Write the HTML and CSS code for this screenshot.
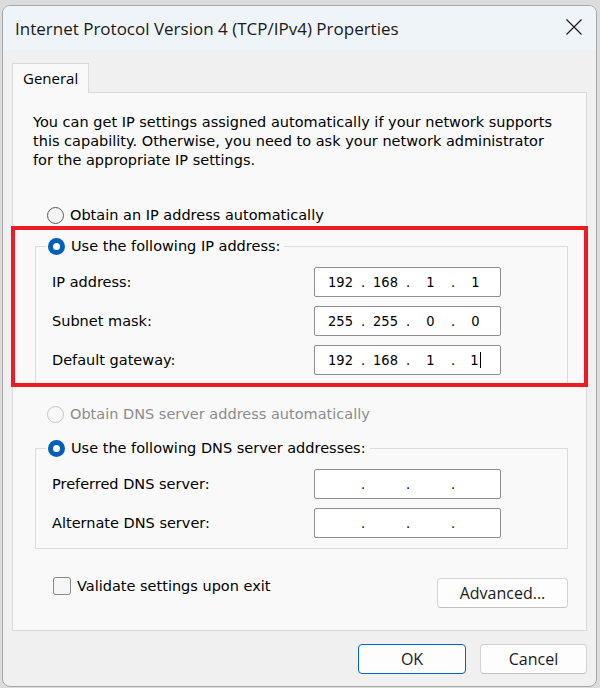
FILE: index.html
```html
<!DOCTYPE html>
<html>
<head>
<meta charset="utf-8">
<link rel="stylesheet" href="styles.css">
</head>
<body>
<div class="window">
  <div class="titlebar">
    <span class="title">Internet Protocol Version 4 (TCP/IPv4) Properties</span>
    <span class="close"><svg width="16" height="16" viewBox="0 0 16 16"><path d="M0.5 0.5 L15.5 15.5 M15.5 0.5 L0.5 15.5" stroke="#1b1b1b" stroke-width="1.2" fill="none"/></svg></span>
  </div>
  <div class="content">
    <div class="tabs"><div class="tab">General</div></div>
    <div class="panel">
      <p class="intro">You can get IP settings assigned automatically if your network supports<br>this capability. Otherwise, you need to ask your network administrator<br>for the appropriate IP settings.</p>
      <div class="option"><span class="radio"></span><span>Obtain an IP address automatically</span></div>
      <div class="group">
        <div class="legend"><span class="radio checked"></span><span>Use the following IP address:</span></div>
        <div class="fields">
          <div class="field"><span class="label">IP address:</span>
            <div class="ip"><span class="oct">192</span><span class="dot">.</span><span class="oct">168</span><span class="dot">.</span><span class="oct">1</span><span class="dot">.</span><span class="oct">1</span></div></div>
          <div class="field"><span class="label">Subnet mask:</span>
            <div class="ip"><span class="oct">255</span><span class="dot">.</span><span class="oct">255</span><span class="dot">.</span><span class="oct">0</span><span class="dot">.</span><span class="oct">0</span></div></div>
          <div class="field"><span class="label">Default gateway:</span>
            <div class="ip"><span class="oct">192</span><span class="dot">.</span><span class="oct">168</span><span class="dot">.</span><span class="oct">1</span><span class="dot">.</span><span class="oct"><span class="caret">1</span></span></div></div>
        </div>
      </div>
      <div class="option disabled"><span class="radio"></span><span>Obtain DNS server address automatically</span></div>
      <div class="group group-dns">
        <div class="legend"><span class="radio checked"></span><span>Use the following DNS server addresses:</span></div>
        <div class="fields">
          <div class="field"><span class="label">Preferred DNS server:</span>
            <div class="ip"><span class="oct"></span><span class="dot">.</span><span class="oct"></span><span class="dot">.</span><span class="oct"></span><span class="dot">.</span><span class="oct"></span></div></div>
          <div class="field"><span class="label">Alternate DNS server:</span>
            <div class="ip"><span class="oct"></span><span class="dot">.</span><span class="oct"></span><span class="dot">.</span><span class="oct"></span><span class="dot">.</span><span class="oct"></span></div></div>
        </div>
      </div>
      <div class="bottom-row">
        <div class="check-row"><span class="checkbox"></span><span>Validate settings upon exit</span></div>
        <button class="btn btn-adv">Advanced...</button>
      </div>
    </div>
    <div class="actions">
      <button class="btn btn-ok">OK</button>
      <button class="btn">Cancel</button>
    </div>
  </div>
  <div class="annotation"></div>
</div>
</body>
</html>
```
FILE: styles.css
```css
* { box-sizing: border-box; }
html, body { margin: 0; padding: 0; }
body {
  background: #dcdcdc;
  width: 600px;
  height: 688px;
  overflow: hidden;
  font-family: "DejaVu Sans", "Liberation Sans", sans-serif;
  font-size: 14.5px;
  color: #000;
}
.window {
  position: relative;
  margin: 5px 3px 0 2px;
  width: 595px;
  height: 682px;
  border: 1px solid #a8a8a8;
  border-radius: 8px;
  background: #f0f0f0;
  overflow: hidden;
}
.titlebar {
  height: 44px;
  background: #eff4f9;
  display: flex;
  align-items: center;
  justify-content: space-between;
  padding: 0 14px 0 12px;
}
.title {
  font-family: "Open Sans", "Noto Sans", sans-serif;
  font-size: 17px;
  color: #1a1a1a;
  margin-top: 1px;
}
.close { display: flex; width: 16px; height: 16px; margin-top: -2px; }
.content {
  padding: 13px 9px 0 9px;
}
.tabs { display: flex; }
.tab {
  width: 77px;
  height: 30px;
  border: 1px solid #d9d9d9;
  border-bottom: none;
  background: #f9f9f9;
  font-family: "Open Sans", "Noto Sans", sans-serif;
  font-size: 15px;
  padding: 4px 0 0 10px;
  margin-bottom: -1px;
  position: relative;
  z-index: 1;
}
.panel {
  background: #f9f9f9;
  border: 1px solid #d9d9d9;
  padding: 20px 18px 22px 20px;
  height: 539px;
}
.intro {
  margin: 0;
  line-height: 19px;
}
.option {
  display: flex;
  align-items: center;
  gap: 6px;
  height: 20px;
  margin-top: 35px;
  padding-left: 14px;
}
.option.disabled { color: #8c8c8c; margin-top: 18px; }
.radio {
  width: 17px;
  height: 17px;
  border-radius: 50%;
  border: 1px solid #5c5c5c;
  background: #f4f4f4;
  flex: none;
  position: relative;
}
.option.disabled .radio { border-color: #c4c4c4; background: #f9f9f9; }
.radio.checked {
  border: none;
  background: #005fb8;
}
.radio.checked::after {
  content: "";
  position: absolute;
  left: 5px; top: 5px;
  width: 7px; height: 7px;
  border-radius: 50%;
  background: #fff;
}
.group {
  margin: 21px 0 0 2px;
  border: 1px solid #dcdcdc;
  padding: 0 0 10px 16px;
}
.group-dns { margin-top: 24px; }
.legend {
  display: flex;
  align-items: center;
  gap: 6px;
  height: 20px;
  margin: -11px 0 0 -6px;
  padding: 0 4px 0 2px;
  width: fit-content;
  background: #f9f9f9;
}
.fields {
  display: flex;
  flex-direction: column;
  gap: 9px;
  margin-top: 11px;
}
.field {
  display: grid;
  grid-template-columns: 262px 187px;
  align-items: center;
}
.ip {
  height: 30px;
  background: #fff;
  border: 1px solid #8f8f8f;
  border-radius: 2px;
  display: flex;
  align-items: center;
  padding-left: 6px;
  font-family: "DejaVu Sans Condensed", "DejaVu Sans", sans-serif;
  font-size: 14.5px;
}
.oct { width: 39px; text-align: center; }
.dot { width: 6px; text-align: center; }
.caret { border-right: 1px solid #000; padding-right: 1px; }
.bottom-row {
  display: flex;
  justify-content: space-between;
  align-items: flex-start;
  margin: 27px 0 0 2px;
}
.check-row {
  display: flex;
  align-items: center;
  gap: 6px;
  padding-left: 18px;
  height: 20px;
}
.checkbox {
  width: 18px;
  height: 18px;
  border: 1px solid #8a8a8a;
  border-radius: 3px;
  background: #f6f6f6;
}
.btn {
  font-family: "Open Sans", "Noto Sans", sans-serif;
  font-size: 16px;
  color: #1a1a1a;
  background: #fdfdfd;
  border: 1px solid #d3d3d3;
  border-bottom-color: #c2c2c2;
  border-radius: 4px;
  height: 30px;
  padding: 0;
}
.btn-adv { width: 131px; margin-top: 2px; }
.actions {
  display: flex;
  justify-content: flex-end;
  gap: 14px;
  margin-top: 13px;
}
.actions .btn { width: 107px; }
.actions .btn-ok { width: 108px; border: 1px solid #0067c0; }
.annotation {
  position: absolute;
  left: 8px;
  top: 220px;
  width: 577px;
  height: 161px;
  border: 4px solid #ed1c24;
  pointer-events: none;
}
```
